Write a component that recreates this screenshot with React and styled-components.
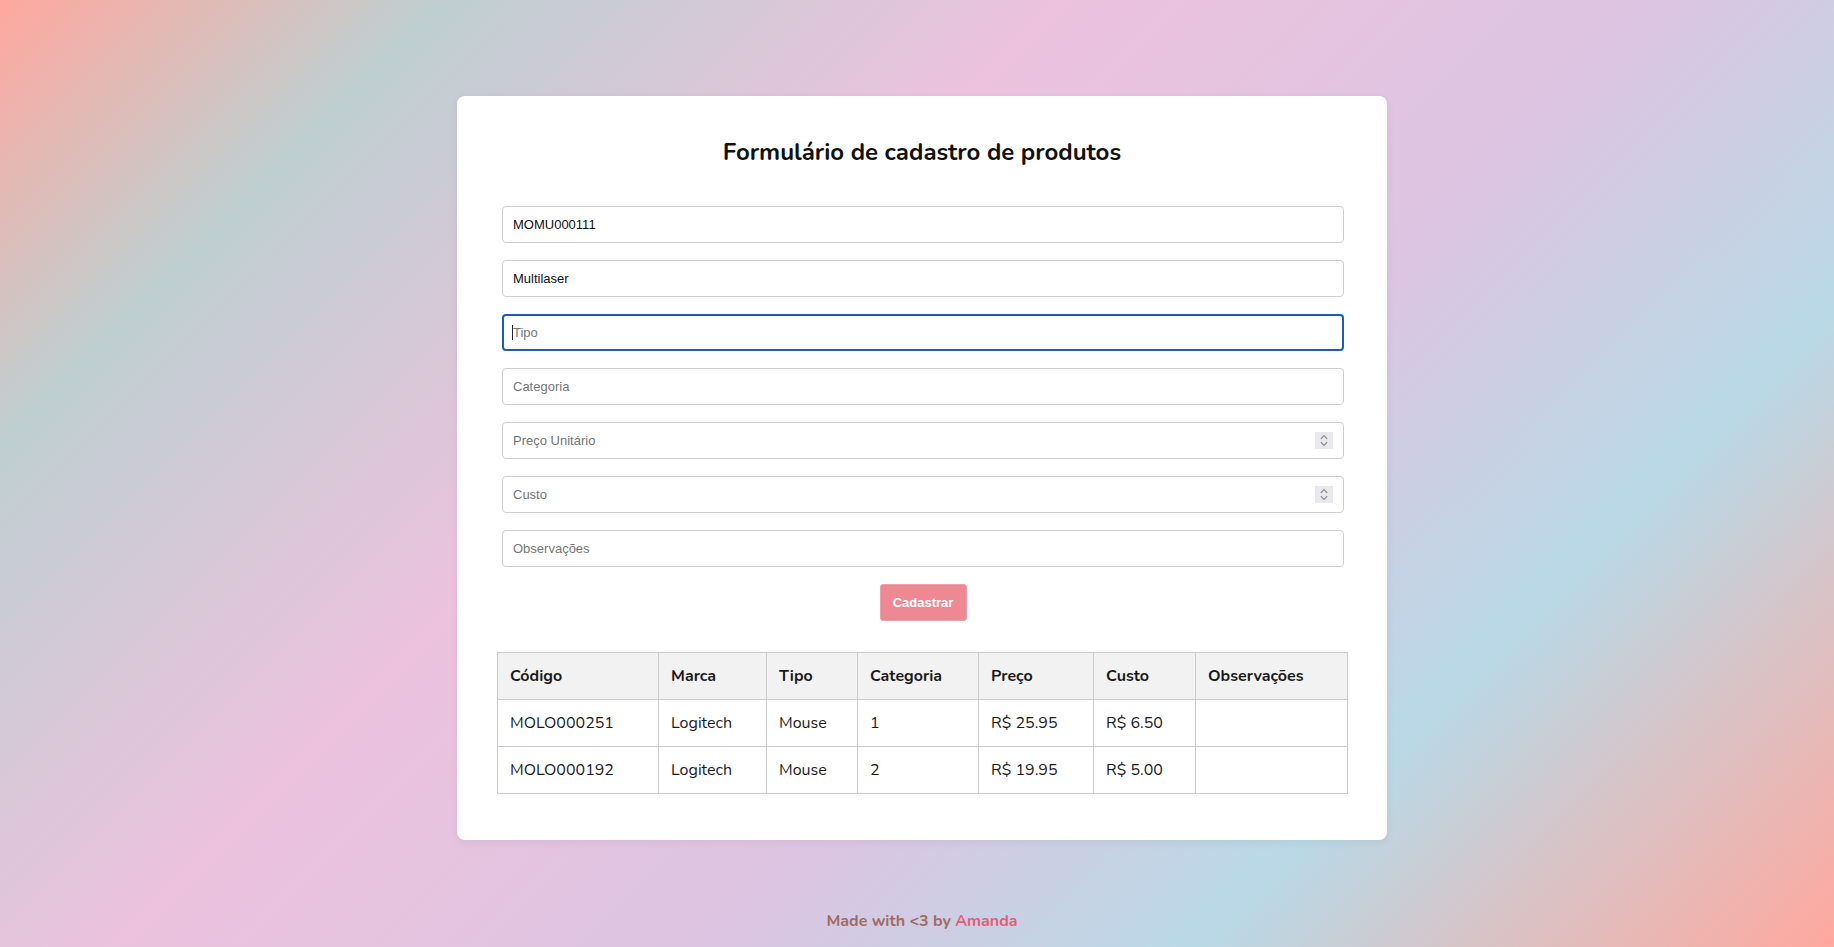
import React from "react";
import styled, { createGlobalStyle } from "styled-components";

const GlobalStyle = createGlobalStyle`
  html, body {
    margin: 0;
    padding: 0;
  }
  body {
    font-family: "Nunito", "Lato", "Open Sans", sans-serif;
  }
  * {
    box-sizing: border-box;
  }
`;

const produtos = [
  { codigo: "MOLO000251", marca: "Logitech", tipo: "Mouse", categoria: "1", preco: "R$ 25.95", custo: "R$ 6.50", obs: "" },
  { codigo: "MOLO000192", marca: "Logitech", tipo: "Mouse", categoria: "2", preco: "R$ 19.95", custo: "R$ 5.00", obs: "" },
];

const colunas = [
  { name: "Código", width: 161 },
  { name: "Marca", width: 108 },
  { name: "Tipo", width: 91 },
  { name: "Categoria", width: 121 },
  { name: "Preço", width: 115 },
  { name: "Custo", width: 102 },
  { name: "Observações", width: 152 },
];

function Spinner() {
  return (
    <SpinBox>
      <svg width="10" height="13" viewBox="0 0 10 13" fill="none" stroke="#8a8a8e" strokeWidth="1.2">
        <path d="M1.8 4.8 L5 1.6 L8.2 4.8" />
        <path d="M1.8 8.2 L5 11.4 L8.2 8.2" />
      </svg>
    </SpinBox>
  );
}

export default function App() {
  return (
    <Page>
      <GlobalStyle />
      <Card>
        <Title>Formulário de cadastro de produtos</Title>
        <Form onSubmit={(e) => e.preventDefault()}>
          <Field>
            <Input defaultValue="MOMU000111" placeholder="Código" />
          </Field>
          <Field>
            <Input defaultValue="Multilaser" placeholder="Marca" />
          </Field>
          <Field>
            <Input placeholder="Tipo" focused />
            <Caret />
          </Field>
          <Field>
            <Input placeholder="Categoria" />
          </Field>
          <Field>
            <Input placeholder="Preço Unitário" />
            <Spinner />
          </Field>
          <Field>
            <Input placeholder="Custo" />
            <Spinner />
          </Field>
          <Field>
            <Input placeholder="Observações" />
          </Field>
          <Button type="submit">Cadastrar</Button>
        </Form>

        <Table>
          <thead>
            <tr>
              {colunas.map((c) => (
                <Th key={c.name} $w={c.width}>{c.name}</Th>
              ))}
            </tr>
          </thead>
          <tbody>
            {produtos.map((p) => (
              <tr key={p.codigo}>
                <Td>{p.codigo}</Td>
                <Td>{p.marca}</Td>
                <Td>{p.tipo}</Td>
                <Td>{p.categoria}</Td>
                <Td>{p.preco}</Td>
                <Td>{p.custo}</Td>
                <Td>{p.obs}</Td>
              </tr>
            ))}
          </tbody>
        </Table>
      </Card>
      <Footer>
        Made with &lt;3 by <Author>Amanda</Author>
      </Footer>
    </Page>
  );
}

const Page = styled.div`
  min-height: 100vh;
  padding: 96px 0 0 10px;
  display: flex;
  flex-direction: column;
  align-items: center;
  background: linear-gradient(
    135deg,
    #ffa89e 0%,
    #bfcfd1 16%,
    #ecc2de 38%,
    #dcc5e2 60%,
    #b9d9e6 77%,
    #ffa89e 100%
  );
`;

const Card = styled.div`
  width: 930px;
  background: #ffffff;
  border-radius: 8px;
  padding: 40px 40px 46px;
  box-shadow: 0 2px 10px rgba(0, 0, 0, 0.06);
`;

const Title = styled.h2`
  margin: 0 0 38px;
  text-align: center;
  font-size: 24px;
  line-height: 32px;
  font-weight: 700;
  color: #111;
`;

const Form = styled.form`
  display: flex;
  flex-direction: column;
  align-items: center;
  gap: 17px;
  margin: 0 3px 31px 5px;
`;

const Field = styled.div`
  position: relative;
  width: 100%;
`;

const Input = styled.input`
  display: block;
  width: 100%;
  height: 37px;
  padding: 0 10px;
  border: ${({ focused }) => (focused ? "2px solid #1b5cb8" : "1px solid #cfcfcf")};
  padding-left: ${({ focused }) => (focused ? "9px" : "10px")};
  border-radius: 4px;
  font-family: "Liberation Sans", Arial, sans-serif;
  font-size: 13px;
  color: #111;
  background: #fff;
  outline: none;

  &::placeholder {
    color: #767676;
  }
`;

const Caret = styled.span`
  position: absolute;
  left: 10px;
  top: 11px;
  width: 1px;
  height: 15px;
  background: #222;
`;

const SpinBox = styled.div`
  position: absolute;
  right: 11px;
  top: 10px;
  width: 18px;
  height: 17px;
  background: #e9e9ed;
  display: flex;
  align-items: center;
  justify-content: center;
`;

const Button = styled.button`
  width: 87px;
  height: 37px;
  background: #ee8893;
  color: #fff;
  border: 1px solid #e7a2aa;
  border-radius: 3px;
  font-family: "Liberation Sans", Arial, sans-serif;
  font-weight: 700;
  font-size: 13px;
  cursor: pointer;
`;

const Table = styled.table`
  width: 850px;
  border-collapse: collapse;
  table-layout: fixed;
  font-size: 16px;
  color: #1a1a1a;
`;

const Th = styled.th`
  width: ${({ $w }) => $w}px;
  height: 47px;
  padding: 0 12px;
  text-align: left;
  font-weight: 700;
  background: #f2f2f2;
  border: 1px solid #cccccc;
`;

const Td = styled.td`
  height: 47px;
  padding: 0 12px;
  border: 1px solid #cccccc;
`;

const Footer = styled.footer`
  margin-top: 70px;
  font-size: 16px;
  line-height: 22px;
  font-weight: 700;
  color: #a06b63;
`;

const Author = styled.span`
  color: #e35d75;
`;
